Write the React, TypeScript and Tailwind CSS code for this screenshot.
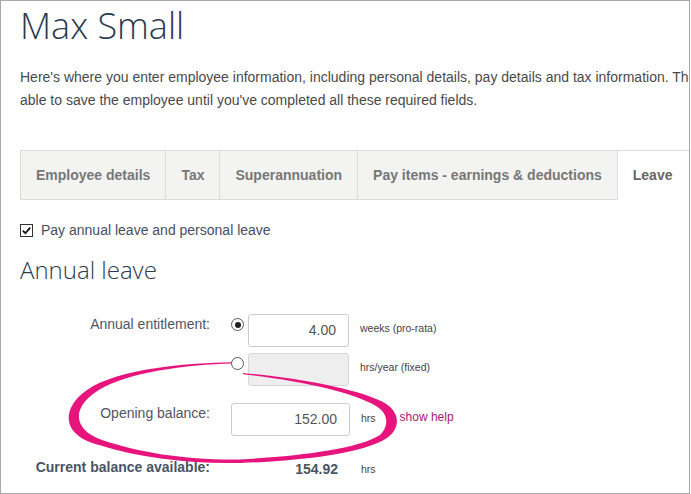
import React from "react";

const tabs = [
  { label: "Employee details", active: false },
  { label: "Tax", active: false },
  { label: "Superannuation", active: false },
  { label: "Pay items - earnings & deductions", active: false },
  { label: "Leave", active: true },
];

function Radio({ checked }: { checked?: boolean }) {
  return (
    <span className="mt-[4px] flex h-[13px] w-[13px] shrink-0 items-center justify-center rounded-full border border-[#5a5a5a] bg-white">
      {checked ? <span className="h-[6px] w-[6px] rounded-full bg-[#222]" /> : null}
    </span>
  );
}

function Checkbox() {
  return (
    <span className="flex h-[13px] w-[13px] items-center justify-center border border-[#333] bg-white">
      <svg viewBox="0 0 12 12" className="h-[11px] w-[11px]" aria-hidden>
        <path d="M2 6.2 L4.8 9 L10 2.8" fill="none" stroke="#111" strokeWidth="2" />
      </svg>
    </span>
  );
}

function Annotation() {
  return (
    <svg
      className="pointer-events-none absolute left-[-1px] top-[-1px]"
      width="690"
      height="494"
      viewBox="0 0 690 494"
      aria-hidden
    >
      <path
        fill="#e6147c"
        d="M 232 362.2
           C 190 363, 118 368, 87 390
           C 60 409, 62 436, 99 445
           C 140 458, 190 464, 240 463
           C 300 461, 362 454, 387 438
           C 402 427, 400 410, 381 401
           C 352 388, 300 378.5, 243 373
           L 243 374.2
           C 300 381, 350 391, 376 406
           C 390 414, 388 428, 380 435
           C 358 449, 300 456, 240 459.5
           C 190 460.5, 140 453, 102 440
           C 74 430, 72 410, 93 394
           C 122 372, 190 364.5, 232 363.6
           Z"
      />
    </svg>
  );
}

export default function App() {
  return (
    <div className="relative h-[494px] w-[690px] overflow-hidden border border-[#a8a8a8] bg-white pl-[19px] font-['Liberation_Sans',Arial,sans-serif]">
      <h1 className="mt-[3px] whitespace-nowrap font-['Open_Sans',sans-serif] text-[36px] font-light leading-[44px] text-[#2b3a4e]">
        Max Small
      </h1>
      <p className="mt-[18px] w-[900px] text-[14px] leading-[23px] text-[#4a4a4a]">
        <span className="block whitespace-nowrap">
          Here's where you enter employee information, including personal details, pay details and tax information. Then you won't be
        </span>
        <span className="block whitespace-nowrap">
          able to save the employee until you've completed all these required fields.
        </span>
      </p>

      <div className="mt-[38px] flex h-[50px] w-[900px] border-t border-[#dcdcdc]">
        {tabs.map((t) => (
          <div
            key={t.label}
            className={
              t.active
                ? "flex items-center whitespace-nowrap border-l border-[#dcdcdc] bg-white px-[15px] text-[14px] font-bold text-[#666]"
                : "flex items-center whitespace-nowrap border-b border-l border-[#dcdcdc] bg-[#f3f3f1] px-[15px] text-[14px] font-bold text-[#777]"
            }
          >
            {t.label}
          </div>
        ))}
        <div className="flex-1" />
      </div>

      <label className="mt-[20px] flex h-[20px] items-center gap-[8px] text-[14px] text-[#46505e]">
        <Checkbox />
        Pay annual leave and personal leave
      </label>

      <h2 className="mt-[14px] font-['Open_Sans',sans-serif] text-[24px] font-light leading-[32px] text-[#2b3a4e]">
        Annual leave
      </h2>

      <div className="mt-[28px] flex flex-col text-[14px]">
        <div className="flex items-start">
          <div className="w-[190px] text-right leading-[20px] text-[#4e5664]">Annual entitlement:</div>
          <div className="ml-[21px]">
            <Radio checked />
          </div>
          <div className="ml-[4px] flex h-[33px] w-[101px] items-center justify-end rounded-[3px] border border-[#cccccc] bg-white pr-[12px] text-[#555]">
            4.00
          </div>
          <div className="ml-[11px] mt-[6px] text-[10.5px] leading-[16px] text-[#444]">weeks (pro-rata)</div>
        </div>

        <div className="mt-[6px] flex items-start">
          <div className="w-[190px]" />
          <div className="ml-[21px]">
            <Radio />
          </div>
          <div className="ml-[4px] h-[33px] w-[101px] rounded-[3px] border border-[#d6d6d6] bg-[#eeeeee]" />
          <div className="ml-[11px] mt-[6px] text-[10.5px] leading-[16px] text-[#444]">hrs/year (fixed)</div>
        </div>

        <div className="mt-[17px] flex items-start">
          <div className="w-[190px] text-right leading-[20px] text-[#4e5664]">Opening balance:</div>
          <div className="ml-[21px] flex h-[33px] w-[119px] items-center justify-end rounded-[3px] border border-[#cccccc] bg-white pr-[12px] text-[#555]">
            152.00
          </div>
          <div className="ml-[11px] mt-[7px] text-[10.5px] leading-[16px] text-[#444]">hrs</div>
          <a className="ml-[24px] mt-[6px] text-[12px] leading-[17px] text-[#a8176f]">show help</a>
        </div>

        <div className="mt-[21px] flex items-start">
          <div className="w-[190px] text-right font-bold leading-[20px] text-[#4a5462]">Current balance available:</div>
          <div className="ml-[21px] mt-[2px] w-[119px] pr-[12px] text-right font-bold leading-[20px] text-[#4a5462]">
            154.92
          </div>
          <div className="ml-[11px] mt-[4px] text-[10.5px] leading-[16px] text-[#444]">hrs</div>
        </div>
      </div>

      <Annotation />
    </div>
  );
}
